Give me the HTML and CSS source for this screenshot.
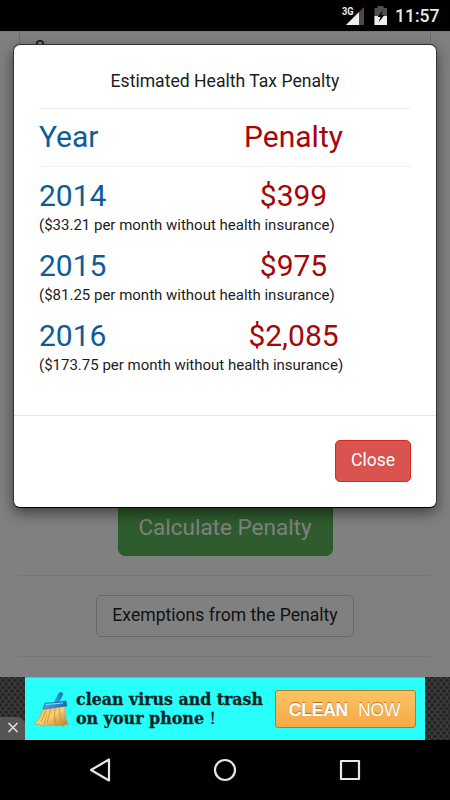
FILE: index.html
```html
<!DOCTYPE html>
<html lang="en">
<head>
<meta charset="utf-8">
<title>Health Tax Penalty</title>
<link rel="stylesheet" href="styles.css">
</head>
<body>
<header class="status">
  <svg class="status-icons" width="60" height="31" viewBox="0 0 60 31">
    <path d="M34 7V25H16Z" fill="#4a4a4a"/>
    <path d="M29 12V25H16Z" fill="#eee"/>
    <path d="M44.5 8h3V6h6v2h3.5v17H44.5Z" fill="#4f4f4f"/>
    <path d="M44.5 16h12.5v9H44.5Z" fill="#eee"/>
    <path d="M53 10l-5.5 7h3l-2 5.5 6-7.5h-3Z" fill="#080808"/>
    <text class="network" x="12" y="15" textLength="11.5" lengthAdjust="spacingAndGlyphs">3G</text>
  </svg>
  <span class="clock">11:57</span>
</header>
<main class="app">
  <div class="page">
    <div class="field">2</div>
    <button class="calculate">Calculate Penalty</button>
    <hr class="rule">
    <button class="exemptions">Exemptions from the Penalty</button>
    <hr class="rule">
  </div>
  <section class="modal" role="dialog">
    <div class="modal-body">
      <h1 class="title">Estimated Health Tax Penalty</h1>
      <div class="row heading"><span class="year">Year</span><span class="amount">Penalty</span></div>
      <div class="row"><span class="year">2014</span><span class="amount">$399</span></div>
      <p class="note">($33.21 per month without health insurance)</p>
      <div class="row"><span class="year">2015</span><span class="amount">$975</span></div>
      <p class="note">($81.25 per month without health insurance)</p>
      <div class="row"><span class="year">2016</span><span class="amount">$2,085</span></div>
      <p class="note">($173.75 per month without health insurance)</p>
    </div>
    <footer class="modal-footer"><button class="close">Close</button></footer>
  </section>
</main>
<aside class="ad">
  <div class="ad-dismiss"><svg width="25" height="23" viewBox="0 0 25 23"><path d="M8.5 6l9 9m0-9l-9 9" stroke="#ddd" stroke-width="1.7"/></svg></div>
  <div class="banner">
    <svg class="broom" width="36" height="38" viewBox="0 0 36 38">
      <defs>
        <linearGradient id="bristle" x2="1" y2="1"><stop offset="0" stop-color="#f0b750"/><stop offset=".5" stop-color="#f6cf76"/><stop offset="1" stop-color="#bd771b"/></linearGradient>
        <linearGradient id="handle" x2="1"><stop offset="0" stop-color="#45a9f0"/><stop offset="1" stop-color="#1769b5"/></linearGradient>
      </defs>
      <path d="M10 15Q7 26 1 32l2 2 2-1 3 2 4-1 4 1 3-1 4 1 3-1 4 1 1-2 3 1Q30 25 31 15Z" fill="url(#bristle)" stroke="#c58d35" stroke-width=".6"/>
      <path d="M13 17L7 31m10-14-4 15m8-15-1 14m5-14 2 14m-14-7-3 9m11-6 1 6" stroke="#c98e36" stroke-width=".8" fill="none"/>
      <path d="M20 12L25 2q3-2 4 1l-5 10Z" fill="url(#handle)" stroke="#1c70ae" stroke-width=".5"/>
      <path d="M11 12Q20 12 32 10l1 5-24 3Z" fill="url(#handle)" stroke="#1671b0" stroke-width=".7"/>
      <path d="M12 13.5l17-1.5" stroke="#8bd4ff"/>
    </svg>
    <svg class="slogan" width="196" height="48" viewBox="0 0 196 48">
      <text x="1" y="20" textLength="187" lengthAdjust="spacingAndGlyphs">clean virus and trash</text>
      <text x="1" y="38.5" textLength="140" lengthAdjust="spacingAndGlyphs">on your phone <tspan class="bang">!</tspan></text>
    </svg>
    <div class="clean"><b>CLEAN</b><span>NOW</span></div>
  </div>
</aside>
<nav class="nav">
  <svg width="450" height="60" viewBox="0 0 450 60" fill="none" stroke="#e6e6e6" stroke-width="2.2" stroke-linejoin="round">
    <path d="M109 19.5V40.5L91 30Z"/>
    <circle cx="225" cy="30" r="10"/>
    <rect x="341" y="21" width="18" height="18"/>
  </svg>
</nav>
</body>
</html>
```

FILE: styles.css
```css
* { box-sizing: border-box; }
body {
  margin: 0;
  width: 450px;
  height: 800px;
  overflow: hidden;
  background: #000;
  font-family: Roboto, sans-serif;
  color: #1c1c1c;
}
button { font-family: inherit; padding: 0; }
.status {
  height: 31px;
  display: flex;
  justify-content: flex-end;
  padding-right: 10px;
  color: #e8e8e8;
}
.status-icons { margin-right: 5px; }
.network { font: bold 10.5px Roboto, sans-serif; fill: #eee; }
.clock { font-size: 17.5px; font-weight: 500; line-height: 33px; width: 45px; white-space: nowrap; }
.app { position: relative; height: 646px; background: #808080; overflow: hidden; }
.page {
  display: flex;
  flex-direction: column;
  align-items: center;
  padding: 0 19px;
  height: 646px;
  border-top: 1px solid #777;
}
.field {
  width: 100%;
  height: 460px;
  padding: 3px 15px;
  border: solid #6c6c6c;
  border-width: 0 1px;
  color: #111;
  font-size: 18px;
  line-height: 24px;
}
.calculate {
  width: 215px;
  height: 65px;
  border: 1px solid #265a26;
  border-radius: 7px;
  background: #2e5c2e;
  color: #808080;
  font-size: 22.5px;
  padding-top: 7px;
}
.rule { width: 100%; height: 1px; border: 0; margin: 18px 0 20px; background: #777; flex: none; }
.calculate + .rule { margin: 19px 0; }
.exemptions {
  width: 258px;
  height: 42px;
  flex: none;
  border: 1px solid #676767;
  border-radius: 5px;
  background: #808080;
  color: #111;
  font-size: 17.6px;
  padding-bottom: 2px;
}
.exemptions + .rule { margin-top: 19px; }
.modal {
  position: absolute;
  left: 13px;
  top: 13px;
  width: 424px;
  height: 464px;
  border: 1px solid #333;
  border-bottom: 1px solid #000;
  border-radius: 7px;
  background: #fff;
  box-shadow: 0 5px 14px rgba(0, 0, 0, .5);
}
.modal-body { height: 371px; padding: 24px 25px 0; border-bottom: 1px solid #e5e5e5; }
.title { margin: 0; font-size: 17.6px; font-weight: 400; line-height: 25px; height: 39px; text-align: center; }
.row { display: grid; grid-template-columns: 137px 235px; height: 40px; font-size: 30px; line-height: 40px; }
.heading { height: 59px; line-height: 56px; margin-bottom: 9px; border-top: 1px solid #eee; border-bottom: 1px solid #eee; }
.year { color: #0d5c99; }
.amount { color: #a50609; text-align: center; }
.note { margin: 0; height: 30px; font-size: 15px; line-height: 18px; white-space: nowrap; }
.modal-footer { display: flex; justify-content: flex-end; padding: 24px 25px 0; }
.close {
  width: 76px;
  height: 42px;
  border: 1px solid #dc251d;
  border-radius: 5px;
  background: #d9534f;
  color: #fff;
  font-size: 17.5px;
  padding-bottom: 2px;
}
.ad {
  height: 63px;
  display: flex;
  align-items: flex-end;
  background-color: #303030;
  background-image: radial-gradient(circle, #252525 1.6px, transparent 2px), radial-gradient(circle, #252525 1.6px, #3b3b3b 2.2px);
  background-size: 6px 7px;
  background-position: 0 0, 3px 3.5px;
}
.ad-dismiss { width: 25px; height: 23px; background: #555; border-top-right-radius: 8px; }
.banner { display: flex; width: 400px; height: 63px; background: #29fffa; border-top: 1px solid #63bfbd; }
.broom { margin: 13px 5px 0 8.5px; flex: none; }
.slogan { margin-top: 7px; flex: none; }
.slogan text { font: bold 16px "DejaVu Serif", serif; fill: #112424; stroke: #112424; stroke-width: .3px; }
.slogan .bang { font-weight: 400; }
.clean {
  display: flex;
  align-items: center;
  justify-content: center;
  gap: 10px;
  width: 141px;
  height: 38px;
  margin: 12px 0 0 4px;
  border: 1px solid #b77a22;
  border-radius: 3px;
  background: linear-gradient(#fac464, #f7a846);
  color: #fff;
  font: 17.5px "Liberation Sans", sans-serif;
  letter-spacing: -.2px;
  text-shadow: 0 -1px 1px #aa752f;
  padding: 2px 1px 0 0;
}
.nav { height: 60px; background: #000; }
.nav svg { display: block; }
```
